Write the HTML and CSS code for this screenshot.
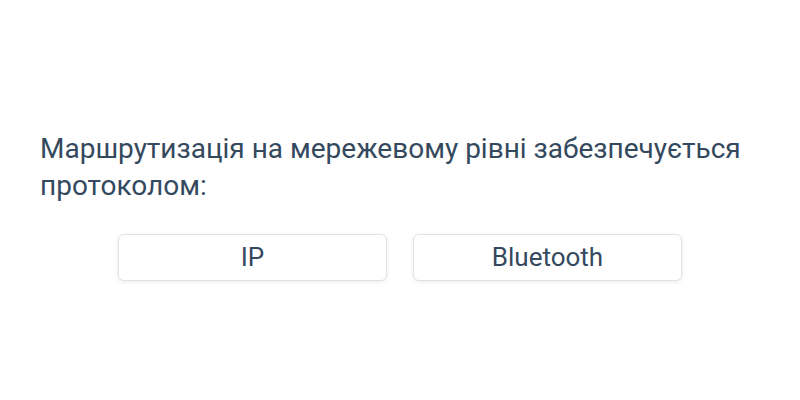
FILE: index.html
```html
<!DOCTYPE html>
<html lang="uk">
<head>
	<meta charset="UTF-8">
	<title>Питання</title>
	<link rel="stylesheet" href="styles.css">
</head>
<body>
	<div class="quiz">
		<p class="question">Маршрутизація на мережевому рівні забезпечується протоколом:</p>
		<div class="answers">
			<button class="answer">IP</button>
			<button class="answer">Bluetooth</button>
		</div>
	</div>
</body>
</html>
```

FILE: styles.css
```css
body {
	margin: 0;
	height: 400px;
	background: #fff;
	font-family: Roboto, "Noto Sans", sans-serif;
	color: #34495e;
	display: flex;
	flex-direction: column;
	justify-content: center;
}

.quiz {
	padding: 10px 40px 0;
}

.question {
	margin: 0 0 30px;
	font-size: 28px;
	line-height: 37px;
}

.answers {
	display: flex;
	justify-content: center;
	gap: 26px;
}

.answer {
	width: 269px;
	height: 47px;
	background: #fff;
	border: 1px solid #e2e2e2;
	border-radius: 6px;
	box-shadow: 0 1px 4px rgba(0, 0, 0, 0.08);
	font-family: Roboto, "Noto Sans", sans-serif;
	font-size: 26px;
	color: #34495e;
	cursor: pointer;
}
```
